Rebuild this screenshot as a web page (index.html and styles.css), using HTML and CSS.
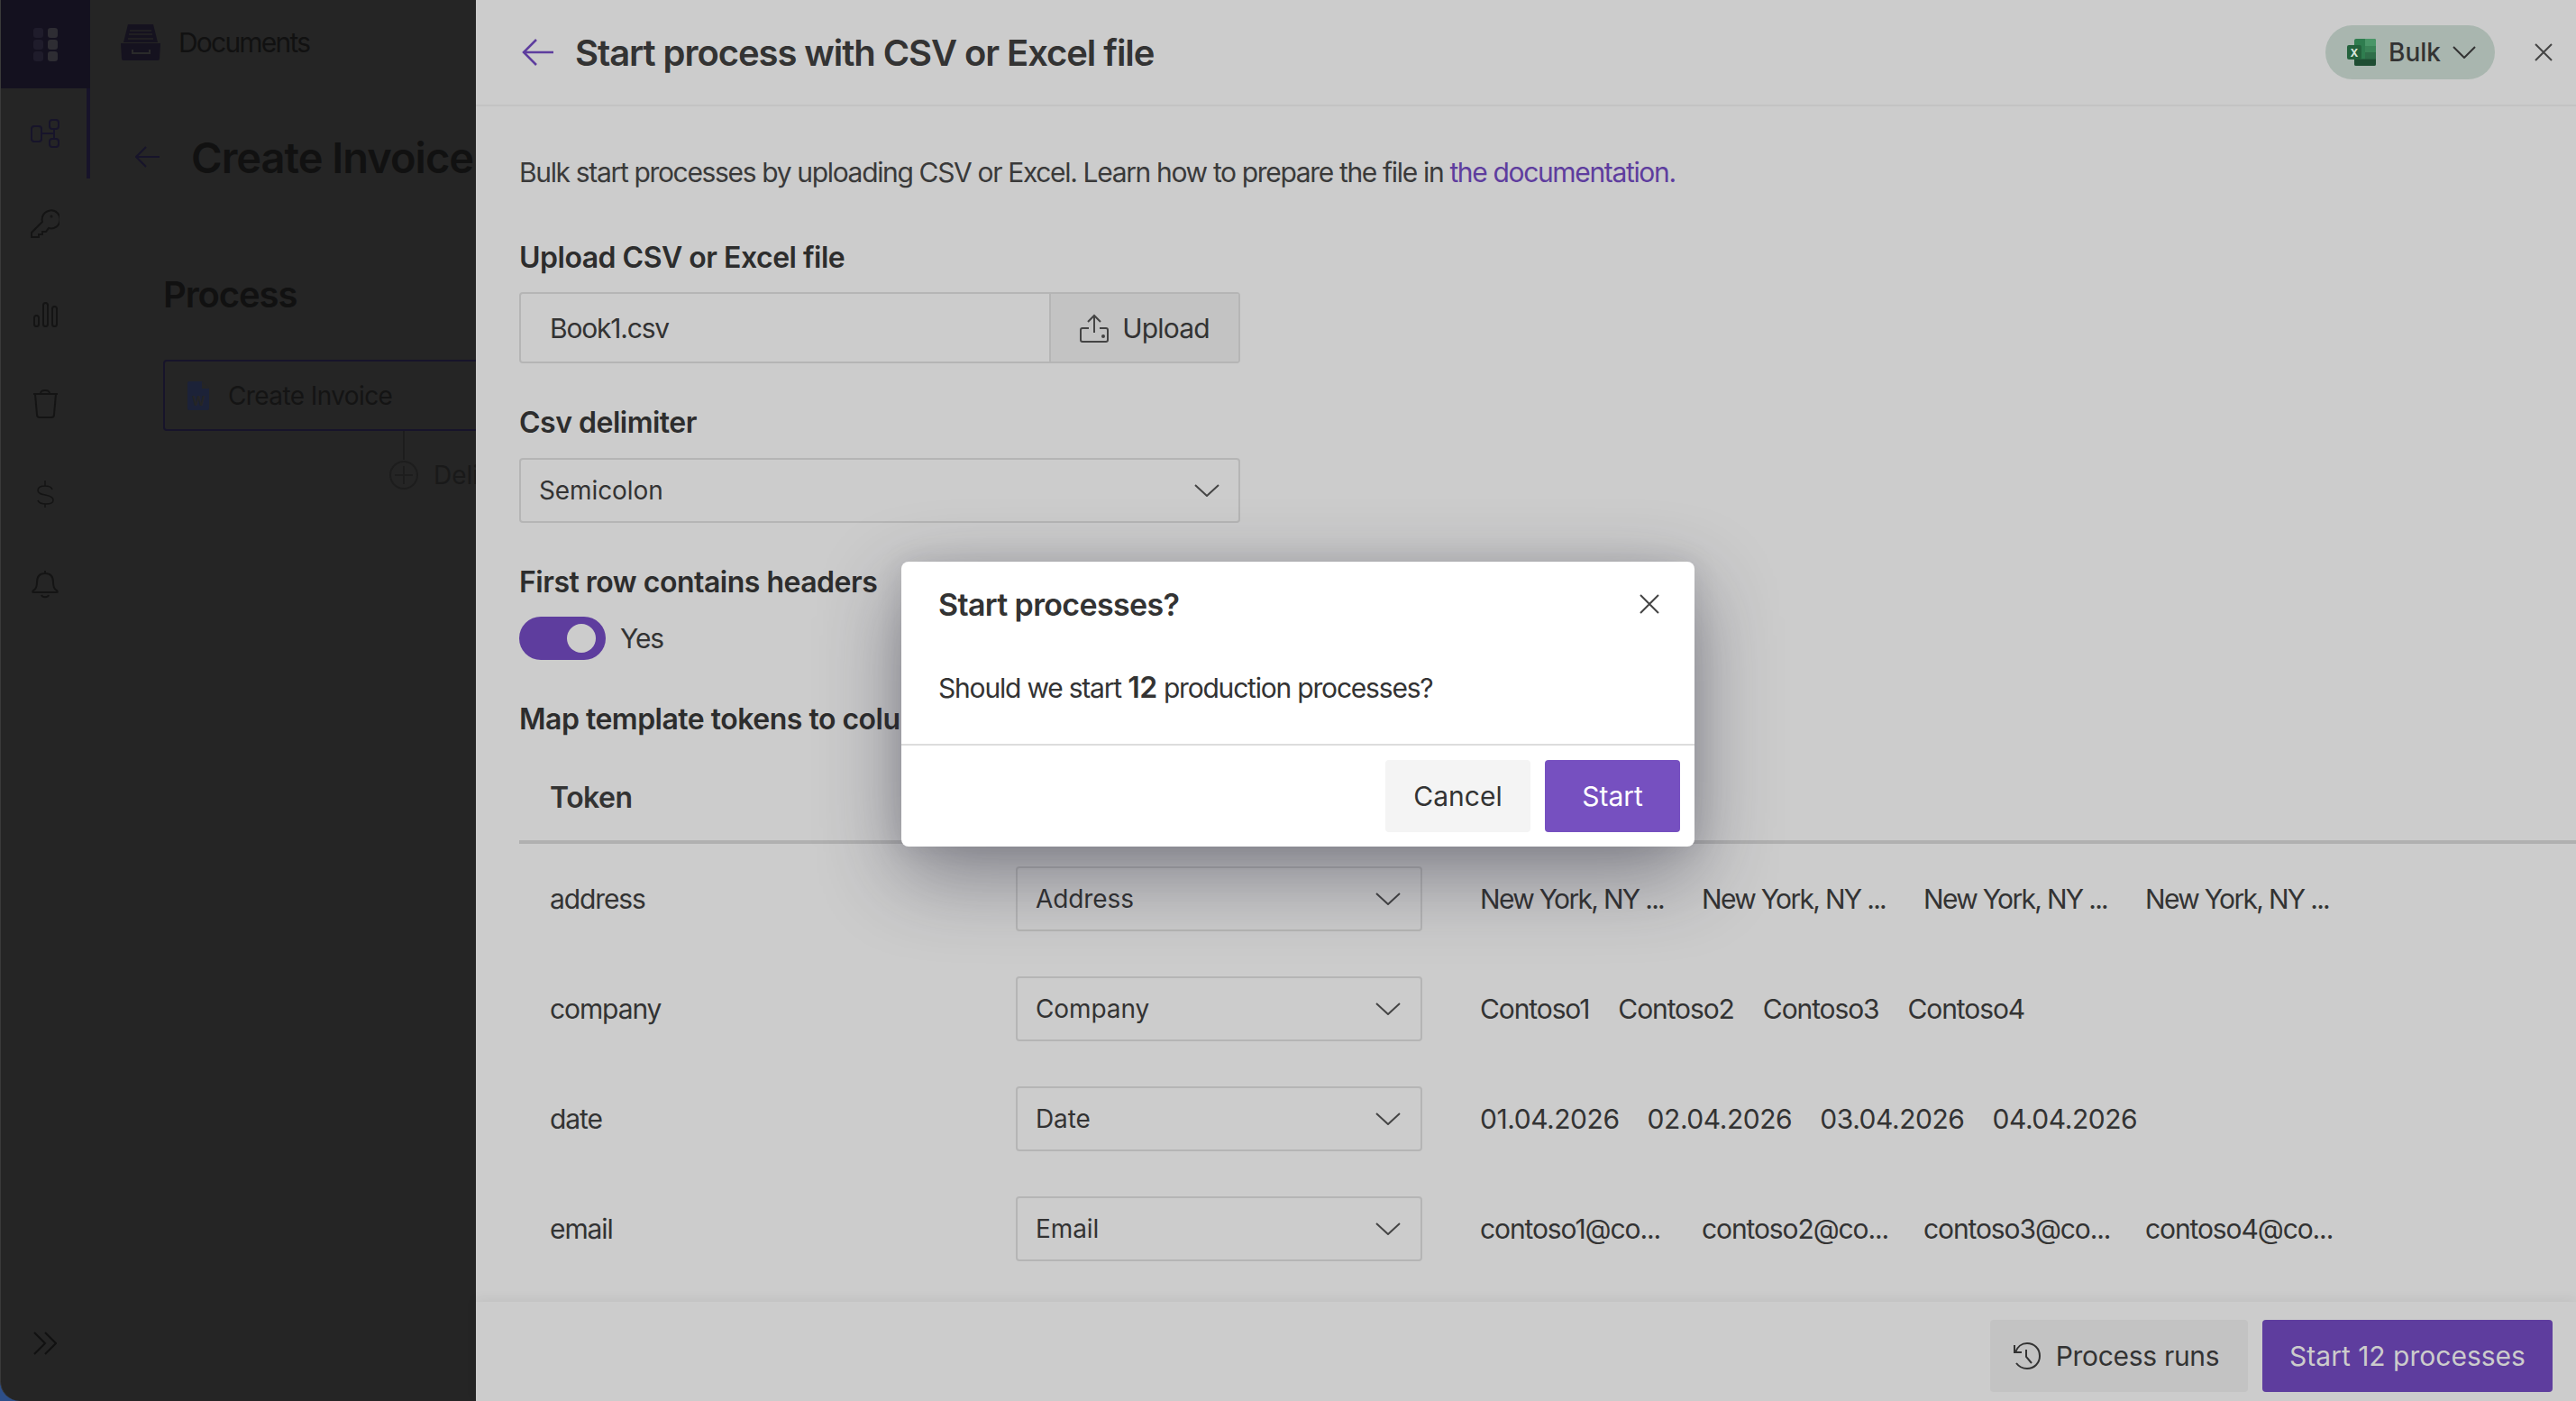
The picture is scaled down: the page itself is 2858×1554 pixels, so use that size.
FILE: index.html
```html
<!DOCTYPE html>
<html lang="en">
<head>
    <meta charset="UTF-8">
    <title>Start process with CSV or Excel file</title>
    <link rel="stylesheet" href="styles.css">
</head>
<body>
    <div class="app">
        <nav class="sidebar">
            <div class="sidebar-top">
                <svg class="grid-icon" viewBox="0 0 27 37"><rect x="0" y="0" width="11" height="11" rx="3" fill="#1f1c2b"/><rect x="0" y="13" width="11" height="11" rx="3" fill="#1f1c2b"/><rect x="0" y="26" width="11" height="11" rx="3" fill="#1f1c2b"/><rect x="16" y="0" width="11" height="11" rx="3" fill="#2e2d33"/><rect x="16" y="13" width="11" height="11" rx="3" fill="#2e2d33"/><rect x="16" y="26" width="11" height="11" rx="3" fill="#2e2d33"/></svg>
            </div>
            <div class="nav-item nav-active"><svg class="nav-icon" viewBox="0 0 32 32"><rect x="1" y="8" width="11" height="17" rx="3"/><rect x="21" y="1" width="10" height="10" rx="3"/><rect x="21" y="22" width="10" height="9" rx="3"/><path d="M12 16h14M26 11v11"/></svg></div>
            <div class="nav-item"><svg class="nav-icon" viewBox="0 0 32 32"><path d="M1 31v-5L13 14A10 10 0 1 1 20 21L17 25h-4v3H9v3z"/><circle cx="23" cy="8" r="0.5"/></svg></div>
            <div class="nav-item"><svg class="nav-icon" viewBox="0 0 32 32"><rect x="4" y="18" width="5" height="12" rx="2.500"/><rect x="14" y="4" width="5" height="26" rx="2.500"/><rect x="24" y="8" width="5" height="22" rx="2.500"/></svg></div>
            <div class="nav-item"><svg class="nav-icon" viewBox="0 0 32 32"><path d="M3 5h27M5 5l2 23c0 2 1 3 3 3h13c2 0 3-1 3-3l2-23M11 5c0-3 1-4 5-4s5 1 5 4"/></svg></div>
            <div class="nav-item"><svg class="nav-icon nav-icon-thin" viewBox="0 0 32 32"><path d="M24 11c-1-3-4-4-8-4-5 0-8 2-8 5 0 7 17 3 17 11 0 3-4 4-8 4-5 0-8-1-9-4M16 1v6M16 27v4"/></svg></div>
            <div class="nav-item"><svg class="nav-icon" viewBox="0 0 32 32"><path d="M16 1v3M16 4c-6 0-9 4-9 10 0 5-2 8-4 9-1 1-1 2 0 2h26c1 0 1-1 0-2-2-1-4-4-4-9 0-6-3-10-9-10zM12 28c1 3 7 3 8 0"/></svg></div>
            <div class="nav-bottom"><svg class="expand-icon" viewBox="0 0 26 26"><path d="M1 1l12 12L1 25M13 1l12 12-12 12"/></svg></div>
        </nav>

        <main class="content">
            <div class="content-top">
                <svg class="documents-icon" viewBox="0 0 44 40"><path d="M8 0h28l5 20H3z" fill="#15121f"/><path d="M10 7h24M9 11h26M8 16h28" stroke="#252525" stroke-width="1.500"/><path d="M0 21h44l-1 17a2 2 0 0 1-2 2H3a2 2 0 0 1-2-2z" fill="#15121f"/><path d="M13 28v4h19v-4" fill="none" stroke="#2a2a2a" stroke-width="2"/></svg>
                <span>Documents</span>
            </div>
            <div class="page-title">
                <svg class="back-arrow" viewBox="0 0 28 24"><path d="M27 12H1M12 1L1 12l11 11"/></svg>
                <h2>Create Invoice</h2>
            </div>
            <h3 class="process-title">Process</h3>
            <div class="process-box">
                <svg class="word-icon" viewBox="0 0 24 32"><path d="M2 0h14l8 8v22a2 2 0 0 1-2 2H2a2 2 0 0 1-2-2V2a2 2 0 0 1 2-2z" fill="#1c2238"/><path d="M16 0v8h8z" fill="#252525"/><text x="12" y="27" class="word-letter">W</text></svg>
                <span>Create Invoice</span>
            </div>
            <div class="process-add">
                <span class="add-line"></span>
                <div class="add-row">
                    <svg class="add-icon" viewBox="0 0 32 32"><circle cx="16" cy="16" r="15"/><path d="M16 6v20M6 16h20"/></svg>
                    <span>Delivery</span>
                </div>
            </div>
        </main>
    </div>

    <section class="drawer">
        <header class="drawer-header">
            <svg class="drawer-back" viewBox="0 0 36 30"><path d="M35 15H2M16 1L2 15l14 14"/></svg>
            <h1>Start process with CSV or Excel file</h1>
            <div class="bulk-pill">
                <svg class="excel-icon" viewBox="0 0 32 30">
                    <rect x="8" y="0" width="24" height="30" rx="2" fill="#2f7d4f"/>
                    <path d="M20 0h10a2 2 0 0 1 2 2v6H20z" fill="#4a9668"/>
                    <rect x="20" y="8" width="12" height="7.500" fill="#3b8458"/>
                    <rect x="20" y="15" width="12" height="7.500" fill="#2f6e49"/>
                    <path d="M8 22.500h24V28a2 2 0 0 1-2 2H10a2 2 0 0 1-2-2z" fill="#1f4d33"/>
                    <rect x="0" y="7" width="16" height="16" rx="2" fill="#24623d"/>
                    <text x="8" y="19.500" class="excel-letter">X</text>
                </svg>
                <span>Bulk</span>
                <svg class="pill-chevron" viewBox="0 0 26 14"><path d="M1 1l12 12L25 1"/></svg>
            </div>
            <svg class="drawer-close" viewBox="0 0 20 20"><path d="M1 1l18 18M19 1L1 19"/></svg>
        </header>

        <div class="drawer-body">
            <p class="intro">Bulk start processes by uploading CSV or Excel. Learn how to prepare the file in <a href="#">the documentation.</a></p>

            <label class="field-label">Upload CSV or Excel file</label>
            <div class="upload-field">
                <span class="upload-name">Book1.csv</span>
                <span class="upload-button">
                    <svg class="upload-icon" viewBox="0 0 32 32"><path d="M16 21V2M9 9l7-7 7 7M10 16H3a2 2 0 0 0-2 2v11a2 2 0 0 0 2 2h26a2 2 0 0 0 2-2V18a2 2 0 0 0-2-2h-7"/><circle cx="26" cy="25" r="1"/></svg>
                    Upload
                </span>
            </div>

            <label class="field-label">Csv delimiter</label>
            <div class="select select-wide">
                <span>Semicolon</span>
                <svg class="chevron" viewBox="0 0 28 14"><path d="M1 1l13 12L27 1"/></svg>
            </div>

            <label class="field-label">First row contains headers</label>
            <div class="toggle-row">
                <span class="toggle"><span class="toggle-knob"></span></span>
                <span>Yes</span>
            </div>

            <label class="field-label">Map template tokens to columns</label>
            <div class="token-head">Token</div>

            <div class="token-row">
                <span class="token-name">address</span>
                <div class="select select-small"><span>Address</span><svg class="chevron" viewBox="0 0 28 14"><path d="M1 1l13 12L27 1"/></svg></div>
                <div class="token-values token-values-long token-values-address">
                    <span>New York, NY ...</span><span>New York, NY ...</span><span>New York, NY ...</span><span>New York, NY ...</span>
                </div>
            </div>
            <div class="token-row">
                <span class="token-name">company</span>
                <div class="select select-small"><span>Company</span><svg class="chevron" viewBox="0 0 28 14"><path d="M1 1l13 12L27 1"/></svg></div>
                <div class="token-values">
                    <span>Contoso1</span><span>Contoso2</span><span>Contoso3</span><span>Contoso4</span>
                </div>
            </div>
            <div class="token-row">
                <span class="token-name">date</span>
                <div class="select select-small"><span>Date</span><svg class="chevron" viewBox="0 0 28 14"><path d="M1 1l13 12L27 1"/></svg></div>
                <div class="token-values token-values-date">
                    <span>01.04.2026</span><span>02.04.2026</span><span>03.04.2026</span><span>04.04.2026</span>
                </div>
            </div>
            <div class="token-row">
                <span class="token-name">email</span>
                <div class="select select-small"><span>Email</span><svg class="chevron" viewBox="0 0 28 14"><path d="M1 1l13 12L27 1"/></svg></div>
                <div class="token-values token-values-long">
                    <span>contoso1@co...</span><span>contoso2@co...</span><span>contoso3@co...</span><span>contoso4@co...</span>
                </div>
            </div>
        </div>

        <footer class="drawer-footer">
            <button class="btn btn-muted">
                <svg class="history-icon" viewBox="0 0 32 32"><path d="M2 4v8h8M3 12C5 6 10 2 16 2c8 0 14 6 14 14s-6 14-14 14c-5 0-9-2-12-6M15 9v8l6 7"/></svg>
                Process runs
            </button>
            <button class="btn btn-primary-dim">Start 12 processes</button>
        </footer>
    </section>

    <div class="modal">
        <div class="modal-head">
            <h4>Start processes?</h4>
            <svg class="modal-close" viewBox="0 0 22 22"><path d="M1 1l20 20M21 1L1 21"/></svg>
        </div>
        <p class="modal-text">Should we start <strong>12</strong> production processes?</p>
        <div class="modal-actions">
            <button class="btn btn-light">Cancel</button>
            <button class="btn btn-primary">Start</button>
        </div>
    </div>
</body>
</html>
```

FILE: styles.css
```css
html, body {
    margin: 0;
    height: 100%;
    overflow: hidden;
    background: #2d4f8a;
}

body {
    font-family: Inter, "Noto Sans", sans-serif;
    color: #333;
}

/* page behind the drawer, dimmed */
.app {
    display: flex;
    height: 100vh;
    background: #252525;
    border-left: 1px solid #3a3a3a;
    border-bottom-left-radius: 22px;
    overflow: hidden;
    box-sizing: border-box;
}

.sidebar {
    width: 99px;
    flex-shrink: 0;
    display: flex;
    flex-direction: column;
}

.sidebar-top {
    height: 98px;
    padding-right: 1px;
    background: #14111f;
    display: flex;
    align-items: center;
    justify-content: center;
}

.grid-icon {
    width: 27px;
    height: 37px;
}

.nav-icon {
    width: 32px;
    height: 32px;
    fill: none;
    stroke: #141414;
    stroke-width: 2;
}

.nav-icon-thin {
    stroke-width: 1.500;
}

.nav-item {
    height: 100px;
    padding-right: 1px;
    display: flex;
    align-items: center;
    justify-content: center;
}

.nav-active {
    box-shadow: inset -4px 0 0 #17132a;
}

.nav-active .nav-icon {
    stroke: #17142a;
}

.nav-bottom {
    margin-top: auto;
    height: 77px;
    padding-right: 1px;
    display: flex;
    justify-content: center;
}

.expand-icon {
    width: 26px;
    height: 26px;
    fill: none;
    stroke: #111;
    stroke-width: 2;
}

.content {
    flex: 1;
    padding: 0 34px;
    color: #111;
}

.content-top {
    display: flex;
    align-items: center;
    gap: 20px;
    height: 94px;
    font-size: 30px;
    letter-spacing: -1.8px;
}

.documents-icon {
    width: 44px;
    height: 40px;
}

.page-title {
    display: flex;
    align-items: center;
    gap: 34px;
    height: 160px;
    padding-left: 16px;
}

.back-arrow {
    width: 28px;
    height: 24px;
    fill: none;
    stroke: #17142a;
    stroke-width: 2;
}

.page-title h2 {
    margin: 0;
    font-size: 47px;
    font-weight: 600;
    letter-spacing: -1px;
    white-space: nowrap;
}

.process-title {
    margin: 49px 0 48px 47px;
    font-size: 40px;
    line-height: 48px;
    font-weight: 600;
    letter-spacing: -1.1px;
}

.process-box {
    margin-left: 47px;
    width: 800px;
    height: 79px;
    box-sizing: border-box;
    border: 2px solid #17142a;
    border-radius: 4px;
    display: flex;
    align-items: center;
    gap: 21px;
    padding-left: 25px;
    font-size: 28px;
    letter-spacing: -0.6px;
    color: #141414;
}

.word-icon {
    width: 24px;
    height: 32px;
}

.word-letter {
    font-size: 14px;
    font-weight: 700;
    fill: #252525;
    text-anchor: middle;
}

.process-add {
    margin-left: 298px;
    display: flex;
    flex-direction: column;
    color: #191919;
    font-size: 28px;
}

.add-line {
    width: 2px;
    height: 32px;
    margin-left: 15px;
    background: #1d1d1d;
}

.add-row {
    display: flex;
    align-items: center;
    gap: 17px;
}

.add-icon {
    width: 32px;
    height: 32px;
    fill: none;
    stroke: #1d1d1d;
    stroke-width: 2;
}

/* drawer */
.drawer {
    position: absolute;
    top: 0;
    right: 0;
    bottom: 0;
    left: 528px;
    background: #ccc;
    display: flex;
    flex-direction: column;
}

.drawer-header {
    height: 118px;
    box-sizing: border-box;
    flex-shrink: 0;
    display: flex;
    align-items: center;
    border-bottom: 2px solid #c3c3c3;
    padding: 0 26px 0 51px;
}

.drawer-back {
    width: 36px;
    height: 30px;
    margin-right: 23px;
    fill: none;
    stroke: #5e3d9e;
    stroke-width: 2.500;
}

.drawer-header h1 {
    margin: 0;
    font-size: 40px;
    font-weight: 600;
    letter-spacing: -1.08px;
    flex: 1;
}

.bulk-pill {
    display: flex;
    align-items: center;
    width: 188px;
    height: 60px;
    box-sizing: border-box;
    padding-left: 24px;
    border-radius: 30px;
    background: #a9b6af;
    font-size: 28px;
    font-weight: 500;
}

.excel-icon {
    width: 32px;
    height: 30px;
    margin-right: 14px;
}

.excel-letter {
    font-size: 12px;
    font-weight: 700;
    fill: #d8e6dd;
    text-anchor: middle;
}

.pill-chevron {
    width: 26px;
    height: 14px;
    margin-left: 13px;
    fill: none;
    stroke: #333;
    stroke-width: 2;
}

.drawer-close {
    width: 20px;
    height: 20px;
    margin-left: 44px;
    fill: none;
    stroke: #444;
    stroke-width: 2;
}

.drawer-body {
    flex: 1;
    padding-left: 48px;
    overflow: hidden;
    font-size: 30px;
    letter-spacing: -1.1px;
}

.intro {
    margin: 56px 0 58px;
    height: 36px;
    line-height: 34px;
    letter-spacing: -1.34px;
    color: #3a3a3a;
}

.intro a {
    color: #5e3d9e;
    text-decoration: none;
}

.field-label {
    display: block;
    margin-top: 48px;
    height: 36px;
    line-height: 36px;
    font-size: 32px;
    font-weight: 600;
    letter-spacing: -0.5px;
    white-space: nowrap;
    color: #2d2d2d;
}

.intro + .field-label {
    margin-top: 58px;
}

.upload-field {
    display: flex;
    width: 800px;
    height: 79px;
    box-sizing: border-box;
    margin-top: 20px;
    border: 2px solid #b5b5b5;
    border-radius: 4px;
}

.upload-name {
    flex: 1;
    padding-left: 32px;
    line-height: 76px;
    letter-spacing: -1.2px;
}

.upload-button {
    width: 208px;
    display: flex;
    align-items: center;
    justify-content: center;
    gap: 15px;
    background: #c3c3c3;
    border-left: 2px solid #b5b5b5;
    letter-spacing: -0.8px;
}

.upload-icon {
    width: 32px;
    height: 32px;
    fill: none;
    stroke: #444;
    stroke-width: 2;
}

.select {
    display: flex;
    align-items: center;
    justify-content: space-between;
    box-sizing: border-box;
    height: 72px;
    border: 2px solid #b5b5b5;
    border-radius: 4px;
    font-size: 28px;
    letter-spacing: -0.1px;
}

.select-wide {
    width: 800px;
    margin-top: 21px;
    padding: 0 21px 0 20px;
}

.select-small {
    width: 451px;
    flex-shrink: 0;
    padding: 0 22px 0 20px;
}

.chevron {
    width: 28px;
    height: 14px;
    fill: none;
    stroke: #444;
    stroke-width: 2;
}

.toggle-row {
    display: flex;
    align-items: center;
    gap: 16px;
    margin-top: 20px;
    height: 48px;
}

.toggle {
    width: 96px;
    height: 48px;
    border-radius: 24px;
    background: #5e3d9e;
    display: flex;
    align-items: center;
    justify-content: flex-end;
    padding-right: 11px;
    box-sizing: border-box;
}

.toggle-knob {
    width: 32px;
    height: 32px;
    border-radius: 50%;
    background: #ccc;
}

.token-head {
    height: 104px;
    margin-top: 16px;
    padding-left: 34px;
    line-height: 106px;
    font-size: 32px;
    font-weight: 600;
    letter-spacing: -0.5px;
    border-bottom: 4px solid #b0b0b0;
    box-sizing: border-box;
}

.token-row {
    display: flex;
    align-items: center;
    height: 122px;
    padding-left: 34px;
}

.token-name {
    width: 517px;
    flex-shrink: 0;
}

.token-values {
    display: flex;
    gap: 32px;
    margin-left: 64px;
    white-space: nowrap;
}

.token-values-long {
    gap: 31px;
}

.token-values-long span {
    width: 215px;
}

.token-values-address {
    letter-spacing: -1.7px;
}

.token-values-date {
    gap: 31px;
    letter-spacing: -0.45px;
}

.drawer-footer {
    height: 110px;
    flex-shrink: 0;
    display: flex;
    align-items: flex-start;
    justify-content: flex-end;
    gap: 16px;
    padding: 20px 26px 0 0;
    box-sizing: border-box;
    background: #ccc;
    box-shadow: 0 -3px 12px rgba(0, 0, 0, 0.06);
}

.btn {
    height: 80px;
    border: none;
    border-radius: 4px;
    font-family: inherit;
    font-size: 30px;
    display: flex;
    align-items: center;
    justify-content: center;
    padding: 0;
}

.btn-muted {
    width: 286px;
    gap: 16px;
    padding-right: 7px;
    background: #c3c3c3;
    color: #333;
    letter-spacing: -0.3px;
}

.btn-primary-dim {
    width: 322px;
    background: #5e3d9e;
    color: #ccc;
}

.history-icon {
    width: 32px;
    height: 32px;
    fill: none;
    stroke: #333;
    stroke-width: 2;
}

/* confirm dialog */
.modal {
    position: absolute;
    left: 1000px;
    top: 623px;
    width: 880px;
    height: 316px;
    background: #fff;
    border-radius: 8px;
    box-shadow: 0 30px 90px rgba(30, 30, 50, 0.45), 0 0 30px rgba(30, 30, 50, 0.1);
    display: flex;
    flex-direction: column;
    box-sizing: border-box;
}

.modal-head {
    display: flex;
    align-items: center;
    justify-content: space-between;
    height: 94px;
    padding: 0 39px 0 41px;
}

.modal-head h4 {
    margin: 0;
    font-size: 34px;
    font-weight: 600;
    letter-spacing: -0.65px;
}

.modal-close {
    width: 22px;
    height: 22px;
    fill: none;
    stroke: #444;
    stroke-width: 2;
}

.modal-text {
    margin: 0;
    flex: 1;
    padding: 26px 41px 0;
    font-size: 30px;
    letter-spacing: -1.2px;
}

.modal-text strong {
    font-size: 32px;
    font-weight: 600;
    letter-spacing: -0.5px;
}

.modal-actions {
    height: 114px;
    box-sizing: border-box;
    border-top: 2px solid #ddd;
    display: flex;
    justify-content: flex-end;
    align-items: center;
    gap: 16px;
    padding-right: 16px;
}

.btn-light {
    width: 161px;
    background: #f4f4f4;
    color: #333;
}

.btn-primary {
    width: 150px;
    background: #7650c0;
    color: #fff;
}
```
